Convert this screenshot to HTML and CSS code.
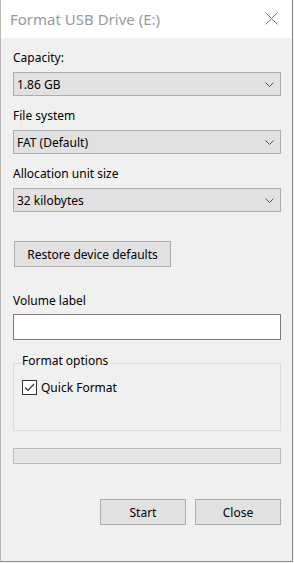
FILE: index.html
```html
<!DOCTYPE html>
<html>

<head>
    <title>Format USB Drive (E:)</title>
    <link rel="stylesheet" href="styles.css">
</head>

<body>

    <div class="window">
        <div class="titlebar">
            <span class="title">Format USB Drive (E:)</span>
            <svg class="close-x" width="13" height="13" viewBox="0 0 13 13">
                <path d="M0.5 0.5 L12.5 12.5 M12.5 0.5 L0.5 12.5" stroke="#808080" stroke-width="1" fill="none"/>
            </svg>
        </div>

        <div class="content">
            <label class="field-label">Capacity:</label>
            <div class="combo">
                <span>1.86 GB</span>
                <svg class="chevron" width="9" height="5" viewBox="0 0 9 5">
                    <polyline points="0.5,0.5 4.5,4.5 8.5,0.5" stroke="#505050" stroke-width="1" fill="none"/>
                </svg>
            </div>

            <label class="field-label">File system</label>
            <div class="combo">
                <span>FAT (Default)</span>
                <svg class="chevron" width="9" height="5" viewBox="0 0 9 5">
                    <polyline points="0.5,0.5 4.5,4.5 8.5,0.5" stroke="#505050" stroke-width="1" fill="none"/>
                </svg>
            </div>

            <label class="field-label">Allocation unit size</label>
            <div class="combo">
                <span>32 kilobytes</span>
                <svg class="chevron" width="9" height="5" viewBox="0 0 9 5">
                    <polyline points="0.5,0.5 4.5,4.5 8.5,0.5" stroke="#505050" stroke-width="1" fill="none"/>
                </svg>
            </div>

            <button type="button" class="btn restore-btn">Restore device defaults</button>

            <label class="field-label volume-label" for="volume">Volume label</label>
            <input type="text" id="volume" class="text-input">

            <fieldset class="options">
                <legend>Format options</legend>
                <div class="check-row">
                    <span class="checkbox">
                        <svg width="13" height="13" viewBox="0 0 13 13">
                            <polyline points="2,6.5 5,9.5 11,3" stroke="#333" stroke-width="1.2" fill="none"/>
                        </svg>
                    </span>
                    <span>Quick Format</span>
                </div>
            </fieldset>

            <div class="progress"></div>

            <div class="button-row">
                <button type="button" class="btn action-btn">Start</button>
                <button type="button" class="btn action-btn">Close</button>
            </div>
        </div>
    </div>

</body>

</html>
```

FILE: styles.css
```css
body {
    margin: 0;
    background: #f0f0f0;
    font-family: "Segoe UI", "Noto Sans", sans-serif;
    font-size: 12px;
    color: #000;
}

.window {
    box-sizing: border-box;
    width: 293px;
    height: 562px;
    background: #f0f0f0;
    border-left: 1px solid #b9b9b9;
    border-right: 1px solid #8c8c8c;
    border-bottom: 1px solid #8c8c8c;
    display: flex;
    flex-direction: column;
}

.titlebar {
    height: 38px;
    background: #fff;
    display: flex;
    align-items: center;
    justify-content: space-between;
    padding: 0 14px 0 9px;
}

.title {
    font-size: 15px;
    color: #999;
    margin-top: -1px;
}

.close-x {
    margin-top: -1px;
}

.content {
    display: flex;
    flex-direction: column;
    padding: 12px 11px 0 12px;
}

.field-label {
    display: block;
    line-height: 16px;
    margin-bottom: 6px;
}

.combo {
    box-sizing: border-box;
    height: 24px;
    background: #e1e1e1;
    border: 1px solid #adadad;
    display: flex;
    align-items: center;
    justify-content: space-between;
    padding: 0 6px 0 3px;
    margin-bottom: 12px;
}

.chevron {
    display: block;
}

.btn {
    box-sizing: border-box;
    background: #e1e1e1;
    border: 1px solid #adadad;
    font-family: inherit;
    font-size: 12px;
    color: #000;
    padding: 0;
}

.restore-btn {
    width: 157px;
    height: 26px;
    margin-top: 17px;
    margin-left: 1px;
}

.volume-label {
    margin-top: 26px;
    margin-bottom: 5px;
}

.text-input {
    box-sizing: border-box;
    height: 26px;
    border: 1px solid #7a7a7a;
    background: #fff;
    margin: 0;
}

.options {
    margin: 13px 0 0 0;
    border: 1px solid #dcdcdc;
    padding: 0 8px 0 8px;
    height: 78px;
    box-sizing: border-box;
}

.options legend {
    padding: 0 2px 4px 0;
    line-height: 16px;
}

.check-row {
    display: flex;
    align-items: center;
    gap: 4px;
    margin-top: 6px;
}

.checkbox {
    box-sizing: border-box;
    width: 15px;
    height: 15px;
    border: 1px solid #333;
    background: #fff;
    display: flex;
    align-items: center;
    justify-content: center;
}

.checkbox svg {
    display: block;
}

.progress {
    box-sizing: border-box;
    height: 16px;
    margin-top: 17px;
    background: #e6e6e6;
    border: 1px solid #bcbcbc;
}

.button-row {
    display: flex;
    justify-content: flex-end;
    gap: 9px;
    margin-top: 35px;
}

.action-btn {
    width: 86px;
    height: 26px;
}
```
